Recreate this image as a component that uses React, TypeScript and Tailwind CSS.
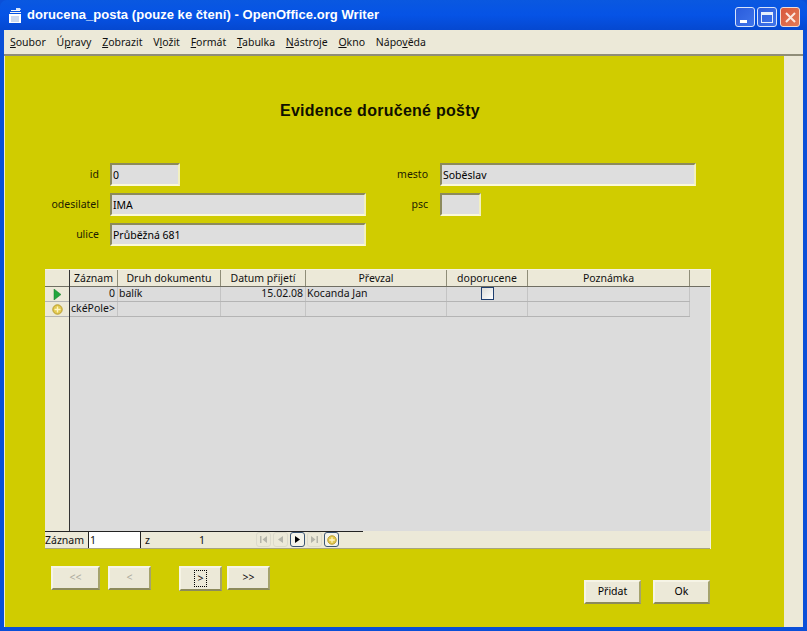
import type { ReactNode } from 'react'

const menu = [
  { before: '', key: 'S', after: 'oubor' },
  { before: 'Ú', key: 'p', after: 'ravy' },
  { before: '', key: 'Z', after: 'obrazit' },
  { before: 'V', key: 'l', after: 'ožit' },
  { before: '', key: 'F', after: 'ormát' },
  { before: '', key: 'T', after: 'abulka' },
  { before: '', key: 'N', after: 'ástroje' },
  { before: '', key: 'O', after: 'kno' },
  { before: 'Nápo', key: 'v', after: 'ěda' },
]

const columns = [
  { title: 'Záznam', width: 'w-[48px]' },
  { title: 'Druh dokumentu', width: 'w-[103px]' },
  { title: 'Datum přijetí', width: 'w-[85px]' },
  { title: 'Převzal', width: 'w-[141px]' },
  { title: 'doporucene', width: 'w-[81px]' },
  { title: 'Poznámka', width: 'w-[162px]' },
]

function Field({ value = '', className }: { value?: string; className: string }) {
  return (
    <div className={`h-[23px] bg-[#dedede] border-2 border-t-[#8c8a5c] border-l-[#8c8a5c] border-b-[#fbf9d8] border-r-[#f2f0c0] pl-[1px] leading-[20px] text-black ${className}`}>
      {value}
    </div>
  )
}

function Label({ children, className }: { children: string; className: string }) {
  return <div className={`text-right leading-[22px] text-[#1c1c00] ${className}`}>{children}</div>
}

function FormButton({ children, className, disabled }: { children: ReactNode; className: string; disabled?: boolean }) {
  return (
    <div className={`flex items-center justify-center bg-[#ece9d8] border-2 border-t-[#f6f4e6] border-l-[#f6f4e6] border-b-[#8c8a5c] border-r-[#a5a36c] ${disabled ? 'text-[#aaa89a]' : 'text-black'} ${className}`}>
      {children}
    </div>
  )
}

function NavIcon({ d, active, faded }: { d: string; active?: boolean; faded?: boolean }) {
  return (
    <div className={`w-[15px] h-[15px] rounded-[3px] flex items-center justify-center ${active ? 'border border-[#3b5573] bg-[#f4f3ea]' : 'border border-[#dcdacb]'}`}>
      <svg width="9" height="9" viewBox="0 0 9 9">
        <path d={d} fill={faded ? '#b5b5aa' : '#000'} />
      </svg>
    </div>
  )
}

function PlusIcon({ size = 11 }: { size?: number }) {
  return (
    <svg width={size} height={size} viewBox="0 0 11 11">
      <circle cx="5.5" cy="5.5" r="4.7" fill="#e2c84e" stroke="#b89c2c" />
      <path d="M5.5 2.500v6M2.500 5.500h6" stroke="#fff6c0" strokeWidth="1.4" />
    </svg>
  )
}

export default function App() {
  return (
    <div className="w-[807px] h-[631px] overflow-hidden flex flex-col bg-[#0a4fd8] text-[10.5px] [font-family:'Noto_Sans',sans-serif]">
      {/* title bar */}
      <div className="h-[30px] shrink-0 flex items-center pl-[7px] pr-[7px] rounded-t-[7px] bg-gradient-to-b from-[#0a58e0] via-[#0653e6] to-[#0548d0]">
        <svg width="16" height="17" viewBox="0 0 16 17" className="mr-[4px]">
          <path d="M2 7h12v9H2z" fill="#fff" />
          <path d="M4 10h8M4 12h8M4 14h8" stroke="#9db4dc" strokeWidth="1" />
          <path d="M4 3h9v1H4zM3 5h11v1H3z" fill="#f4f4f4" />
          <path d="M9 1h4l1 2h-5z" fill="#d8e4f8" />
        </svg>
        <span className="text-white font-bold text-[13px] tracking-[0.05px] [font-family:'Liberation_Sans',sans-serif]">
          dorucena_posta (pouze ke čtení) - OpenOffice.org Writer
        </span>
        <div className="ml-auto flex gap-[2px] mt-[4px]">
          <div className="w-[20px] h-[20px] rounded-[3px] border border-[#d8e4fa] bg-gradient-to-br from-[#2a5cdc] to-[#3f74ea] flex items-end pl-[4px] pb-[3px]">
            <div className="w-[7px] h-[3px] bg-white" />
          </div>
          <div className="w-[20px] h-[20px] rounded-[3px] border border-[#d8e4fa] bg-gradient-to-br from-[#2a5cdc] to-[#3f74ea] flex items-center justify-center">
            <div className="w-[12px] h-[11px] border border-[#e4eefc] border-t-[3px]" />
          </div>
          <div className="ml-[1px] w-[20px] h-[20px] rounded-[3px] border border-[#f0dcd4] bg-gradient-to-br from-[#d8583a] to-[#e27a58] flex items-center justify-center">
            <svg width="13" height="13" viewBox="0 0 13 13">
              <path d="M2 2l9 9M11 2l-9 9" stroke="#fbe8e0" strokeWidth="2" />
            </svg>
          </div>
        </div>
      </div>

      <div className="flex-1 min-h-0 mx-[4px] mb-[4px] flex flex-col bg-[#ece9d8]">
        {/* menu */}
        <div className="h-[26px] shrink-0 flex items-center gap-[10.75px] pl-[6px] pt-[1px] text-[#111] border-b-2 border-[#8f8d78]">
          {menu.map((item) => (
            <span key={item.before + item.key + item.after}>
              {item.before}
              <span className="underline">{item.key}</span>
              {item.after}
            </span>
          ))}
        </div>

        <div className="flex-1 min-h-0 flex">
          {/* document */}
          <div className="w-[779px] ml-[1px] bg-[#d0cc00] flex flex-col">
            <h1 className="mt-[45px] text-center pr-[29px] text-[16px] leading-[20px] font-bold text-[#101000] tracking-[0.27px] [font-family:'Liberation_Sans',sans-serif]">
              Evidence doručené pošty
            </h1>

            <div className="mt-[42px] flex">
              <div className="flex flex-col gap-[7px]">
                <div className="flex">
                  <Label className="w-[94px]">id</Label>
                  <Field value="0" className="ml-[11px] w-[70px]" />
                </div>
                <div className="flex">
                  <Label className="w-[94px]">odesilatel</Label>
                  <Field value="IMA" className="ml-[11px] w-[256px]" />
                </div>
                <div className="flex">
                  <Label className="w-[94px]">ulice</Label>
                  <Field value="Průběžná 681" className="ml-[11px] w-[256px]" />
                </div>
              </div>
              <div className="ml-[10px] flex flex-col gap-[7px]">
                <div className="flex">
                  <Label className="w-[52px]">mesto</Label>
                  <Field value="Soběslav" className="ml-[12px] w-[256px]" />
                </div>
                <div className="flex">
                  <Label className="w-[52px]">psc</Label>
                  <Field className="ml-[12px] w-[41px]" />
                </div>
              </div>
            </div>

            {/* table */}
            <div className="mt-[23px] ml-[40px] w-[666px] h-[280px] flex flex-col bg-[#dcdcdc] border-t border-r border-[#f4f2e4] text-[#111]">
              <div className="flex-1 min-h-0 flex">
                <div className="w-[25px] shrink-0 bg-[#ece9d8] border-r border-[#333] flex flex-col">
                  <div className="h-[17px] border-b border-[#6f6e62]" />
                  <div className="h-[15px] border-b border-[#b4b4b4] flex items-center justify-center">
                    <svg width="9" height="11" viewBox="0 0 9 11">
                      <path d="M1 0l7 5.500L1 11z" fill="#22a63c" stroke="#167a2a" strokeWidth="0.5" />
                    </svg>
                  </div>
                  <div className="h-[15px] border-b border-[#b4b4b4] flex items-center justify-center">
                    <PlusIcon />
                  </div>
                </div>
                <div className="flex-1 min-w-0">
                  <div className="flex h-[17px] bg-[#ece9d8] border-b border-[#6f6e62]">
                    {columns.map((col) => (
                      <div key={col.title} className={`${col.width} shrink-0 border-r border-[#8f8d78] text-center leading-[16px]`}>
                        {col.title}
                      </div>
                    ))}
                    <div className="flex-1" />
                  </div>
                  <div className="flex h-[15px] w-[620px] border-b border-[#b4b4b4] leading-[13px]">
                    <div className="w-[48px] shrink-0 border-r border-[#c4c4c4] text-right pr-[2px]">0</div>
                    <div className="w-[103px] shrink-0 border-r border-[#c4c4c4] pl-[1px]">balík</div>
                    <div className="w-[85px] shrink-0 border-r border-[#c4c4c4] text-right pr-[2px]">15.02.08</div>
                    <div className="w-[141px] shrink-0 border-r border-[#c4c4c4] pl-[1px]">Kocanda Jan</div>
                    <div className="w-[81px] shrink-0 border-r border-[#c4c4c4] flex justify-center">
                      <div className="w-[13px] h-[13px] border border-[#1f3f70] bg-gradient-to-br from-[#dcdcd8] to-white" />
                    </div>
                    <div className="w-[162px] shrink-0 border-r border-[#c4c4c4]" />
                  </div>
                  <div className="flex h-[15px] w-[620px] border-b border-[#b4b4b4] leading-[13px]">
                    <div className="w-[48px] shrink-0 border-r border-[#c4c4c4] pl-[1px] overflow-hidden whitespace-nowrap">ckéPole&gt;</div>
                    <div className="w-[103px] shrink-0 border-r border-[#c4c4c4]" />
                    <div className="w-[85px] shrink-0 border-r border-[#c4c4c4]" />
                    <div className="w-[141px] shrink-0 border-r border-[#c4c4c4]" />
                    <div className="w-[81px] shrink-0 border-r border-[#c4c4c4]" />
                    <div className="w-[162px] shrink-0 border-r border-[#c4c4c4]" />
                  </div>
                </div>
              </div>
              {/* record navigation */}
              <div className="h-[18px] shrink-0 flex bg-[#ece9d8] border-b border-[#a8a67e] text-[#111]">
                <div className="w-[318px] shrink-0 flex border-t border-[#222] leading-[17px]">
                  <span className="w-[43px] shrink-0">Záznam</span>
                  <div className="w-[53px] shrink-0 bg-white border-l border-r border-[#222] pl-[1px]">1</div>
                  <span className="ml-[4px] w-[54px] shrink-0">z</span>
                  <span className="w-[60px] shrink-0">1</span>
                  <div className="flex items-center gap-[2px] -ml-[3px] mt-[-1px]">
                    <NavIcon d="M1 1h1.500v7H1zM8 1v7L3.500 4.500z" faded />
                    <NavIcon d="M7 1v7L2 4.500z" faded />
                    <NavIcon d="M2 1v7l5-3.500z" active />
                    <NavIcon d="M1 1v7l4.500-3.500zM6.500 1H8v7H6.500z" faded />
                    <div className="w-[15px] h-[15px] rounded-[3px] border border-[#3b5573] bg-[#f4f3ea] flex items-center justify-center">
                      <PlusIcon size={10} />
                    </div>
                  </div>
                </div>
              </div>
            </div>

            {/* buttons */}
            <div className="mt-[17px] ml-[46px] flex items-start">
              <FormButton disabled className="w-[49px] h-[24px]">&lt;&lt;</FormButton>
              <FormButton disabled className="ml-[8px] w-[43px] h-[24px]">&lt;</FormButton>
              <FormButton className="ml-[28px] w-[43px] h-[25px] border-b-[#6f6d40] border-r-[#6f6d40]">
                <div className="w-[13px] h-[17px] border border-dotted border-black flex items-center justify-center leading-none">&gt;</div>
              </FormButton>
              <FormButton className="ml-[5px] w-[43px] h-[24px]">&gt;&gt;</FormButton>
              <FormButton className="ml-[314px] mt-[14px] w-[57px] h-[24px]">Přidat</FormButton>
              <FormButton className="ml-[12px] mt-[14px] w-[57px] h-[24px]">Ok</FormButton>
            </div>
          </div>
          <div className="flex-1" />
        </div>
      </div>
    </div>
  )
}
